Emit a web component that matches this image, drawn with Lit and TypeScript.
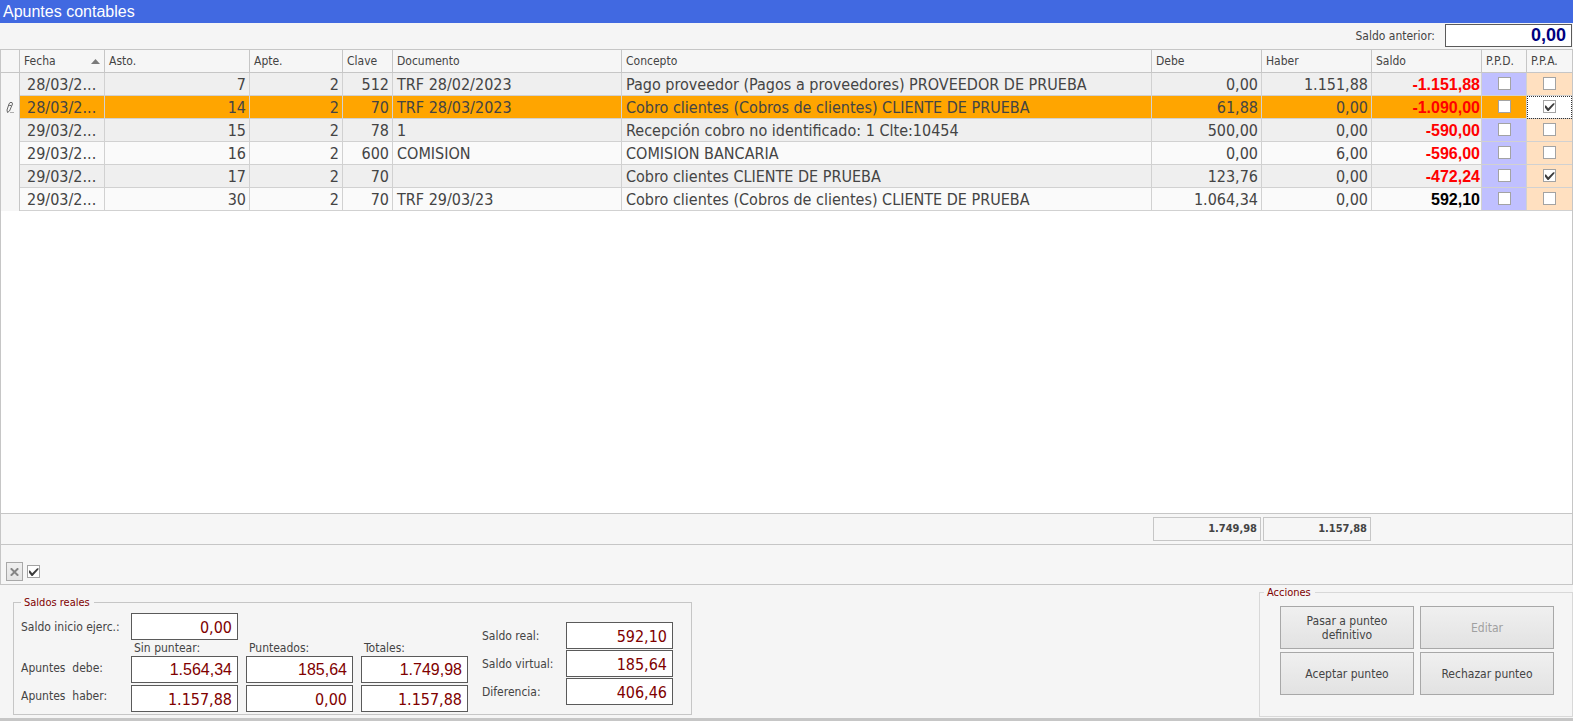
import { LitElement, html, css, svg, nothing } from "lit";
import { customElement, property } from "lit/decorators.js";
import { classMap } from "lit/directives/class-map.js";

interface Entry {
  fecha: string;
  asto: number;
  apte: number;
  clave: number;
  documento: string;
  concepto: string;
  debe: string;
  haber: string;
  saldo: string;
  ppd: boolean;
  ppa: boolean;
  current?: boolean;
}

const ENTRIES: Entry[] = [
  { fecha: "28/03/2...", asto: 7, apte: 2, clave: 512, documento: "TRF 28/02/2023", concepto: "Pago proveedor (Pagos a proveedores) PROVEEDOR DE PRUEBA", debe: "0,00", haber: "1.151,88", saldo: "-1.151,88", ppd: false, ppa: false },
  { fecha: "28/03/2...", asto: 14, apte: 2, clave: 70, documento: "TRF 28/03/2023", concepto: "Cobro clientes (Cobros de clientes) CLIENTE DE PRUEBA", debe: "61,88", haber: "0,00", saldo: "-1.090,00", ppd: false, ppa: true, current: true },
  { fecha: "29/03/2...", asto: 15, apte: 2, clave: 78, documento: "1", concepto: "Recepción cobro no identificado: 1 Clte:10454", debe: "500,00", haber: "0,00", saldo: "-590,00", ppd: false, ppa: false },
  { fecha: "29/03/2...", asto: 16, apte: 2, clave: 600, documento: "COMISION", concepto: "COMISION BANCARIA", debe: "0,00", haber: "6,00", saldo: "-596,00", ppd: false, ppa: false },
  { fecha: "29/03/2...", asto: 17, apte: 2, clave: 70, documento: "", concepto: "Cobro clientes CLIENTE DE PRUEBA", debe: "123,76", haber: "0,00", saldo: "-472,24", ppd: false, ppa: true },
  { fecha: "29/03/2...", asto: 30, apte: 2, clave: 70, documento: "TRF 29/03/23", concepto: "Cobro clientes (Cobros de clientes) CLIENTE DE PRUEBA", debe: "1.064,34", haber: "0,00", saldo: "592,10", ppd: false, ppa: false },
];

@customElement("tick-box")
class TickBox extends LitElement {
  static styles = css`
    :host { display: inline-block; vertical-align: top; }
    .box { display: grid; width: 13px; height: 13px; }
    .input {
      grid-area: 1 / 1; appearance: none; margin: 0; width: 13px; height: 13px;
      box-sizing: border-box; border: 1px solid #a3a3a3; background: #fff;
    }
    .mark { grid-area: 1 / 1; width: 13px; height: 13px; fill: #3c3c3c; pointer-events: none; visibility: hidden; }
    .input:checked + .mark { visibility: visible; }
  `;
  @property({ type: Boolean }) checked = false;
  @property() name = "";
  render() {
    return html`<label class="box">
      <input class="input" type="checkbox" aria-label=${this.name} .checked=${this.checked} />
      <svg class="mark" viewBox="0 0 13 13"><path d="M2 5.6 L3 5.6 L5.2 8.2 L10 3.6 L11.4 3 L11.4 4.4 L5.6 11 L4.6 11 L2 7.8 Z" /></svg>
    </label>`;
  }
}

@customElement("entries-grid")
class EntriesGrid extends LitElement {
  static styles = css`
    :host {
      display: flex; flex-direction: column; box-sizing: border-box;
      border: 1px solid #c6c6c6; background: #fff;
    }
    .table { width: 100%; table-layout: fixed; border-collapse: separate; border-spacing: 0; }
    .c-mark { width: 19px; } .c-date { width: 85px; } .c-asto { width: 145px; }
    .c-apte { width: 93px; } .c-key { width: 50px; } .c-doc { width: 229px; }
    .c-money { width: 110px; } .c-flag { width: 45px; }
    .head {
      box-sizing: border-box; height: 23px; padding: 0 4px; background: #f6f6f6; text-align: left;
      font-size: 12px; line-height: 20px; font-weight: normal; white-space: nowrap;
      border-right: 1px solid #c6c6c6; border-bottom: 1px solid #c6c6c6;
    }
    .head:last-child, .cell:last-child { border-right: none; }
    .sorted { display: flex; justify-content: space-between; align-items: center; }
    .arrow { width: 9px; height: 5px; fill: #7a7a7a; }
    .mark {
      height: 23px; padding: 0; text-align: center; background: #f6f6f6;
      border-right: 1px solid #c6c6c6; line-height: 0;
    }
    .pencil { width: 8px; height: 13px; vertical-align: middle; }
    .cell {
      box-sizing: border-box; height: 23px; padding: 2px 4px 0; font-size: 16px; line-height: 20px;
      white-space: nowrap; overflow: hidden; background: #fafafa;
      border-right: 1px solid #d1d1d1; border-bottom: 1px solid #d1d1d1;
    }
    .row:nth-child(odd) .cell { background: #efefef; }
    .date { padding-left: 7px; }
    .num { text-align: right; padding-right: 3px; }
    .saldo {
      text-align: right; padding-right: 1px; color: #ff0000;
      font-family: "Liberation Sans", Arial, sans-serif; font-weight: bold;
    }
    .positive { color: #000; }
    .flag { text-align: center; padding: 4px 0 5px; line-height: 0; }
    .row .cell.ppd { background: #c0c0ff; }
    .row .cell.ppa { background: #ffe0c0; }
    .row.current .cell { background: #ffa500; }
    .row.current .cell.ppa { background: #fff; outline: 1px dotted #333; outline-offset: -1px; }
    .totals {
      display: flex; justify-content: flex-end; gap: 2px; margin-top: auto;
      padding: 3px 201px 3px 0; background: #f6f6f6; border-top: 1px solid #c6c6c6;
    }
    .total {
      box-sizing: border-box; width: 108px; height: 24px; padding-right: 3px; text-align: right;
      border: 1px solid #c6c6c6; font-size: 11px; line-height: 22px; font-weight: bold;
    }
    .filter {
      display: flex; align-items: center; gap: 4px; padding: 17px 5px 3px; background: #f6f6f6;
      border-top: 1px solid #c6c6c6;
    }
    .clear {
      display: grid; place-items: center; box-sizing: border-box; width: 17px; height: 19px; padding: 0;
      border: 1px solid #a8a8a8; background: linear-gradient(#f0f0f0, #e4e4e4);
    }
    .cross { width: 9px; height: 8px; stroke: #858585; stroke-width: 2; }
  `;

  private row(e: Entry) {
    return html`<tr class=${classMap({ row: true, current: !!e.current })}>
      <td class="mark">${e.current
        ? svg`<svg class="pencil" viewBox="0 0 8 13" fill="none" stroke="#666" stroke-width="1">
            <path d="M3 3 L4 1.5 L6 1.5 L6.5 3 L3.5 10 L1.5 11.5 L1 9 Z M3.2 4.5 L5.3 4.5" />
            <path d="M4.5 11.5 h1 M6.5 11.5 h1" /></svg>`
        : nothing}</td>
      <td class="cell date">${e.fecha}</td>
      <td class="cell num">${e.asto}</td>
      <td class="cell num">${e.apte}</td>
      <td class="cell num">${e.clave}</td>
      <td class="cell">${e.documento}</td>
      <td class="cell">${e.concepto}</td>
      <td class="cell num">${e.debe}</td>
      <td class="cell num">${e.haber}</td>
      <td class=${classMap({ cell: true, saldo: true, positive: !e.saldo.startsWith("-") })}>${e.saldo}</td>
      <td class="cell flag ppd"><tick-box name="P.P.D." .checked=${e.ppd}></tick-box></td>
      <td class="cell flag ppa"><tick-box name="P.P.A." .checked=${e.ppa}></tick-box></td>
    </tr>`;
  }

  render() {
    return html`
      <table class="table">
        <colgroup>
          <col class="c-mark" /><col class="c-date" /><col class="c-asto" /><col class="c-apte" />
          <col class="c-key" /><col class="c-doc" /><col /><col class="c-money" />
          <col class="c-money" /><col class="c-money" /><col class="c-flag" /><col class="c-flag" />
        </colgroup>
        <thead>
          <tr>
            <th class="head"></th>
            <th class="head"><span class="sorted">Fecha <svg class="arrow" viewBox="0 0 9 5"><path d="M0 5 L4.5 0 L9 5 Z" /></svg></span></th>
            ${["Asto.", "Apte.", "Clave", "Documento", "Concepto", "Debe", "Haber", "Saldo", "P.P.D.", "P.P.A."].map(
              (t) => html`<th class="head">${t}</th>`
            )}
          </tr>
        </thead>
        <tbody>${ENTRIES.map((e) => this.row(e))}</tbody>
      </table>
      <div class="totals">
        <output class="total">1.749,98</output>
        <output class="total">1.157,88</output>
      </div>
      <div class="filter">
        <button class="clear" aria-label="Quitar filtro">
          <svg class="cross" viewBox="0 0 9 8"><path d="M0.8 0.3 L8.2 7.7 M8.2 0.3 L0.8 7.7" /></svg>
        </button>
        <tick-box name="Filtro activo" .checked=${true}></tick-box>
      </div>
    `;
  }
}

@customElement("app-root")
class AppRoot extends LitElement {
  static styles = css`
    :host {
      display: flex; flex-direction: column; box-sizing: border-box; min-height: 100vh;
      background: #f5f5f5; color: #444; border-bottom: 3px solid #c6c6c6;
      font-family: "DejaVu Sans Condensed", "Noto Sans", sans-serif; font-size: 12px; line-height: 14px;
    }
    .title {
      margin: 0; height: 23px; padding-left: 3px; background: #4169e1; color: #fff;
      font: 16px/23px "Liberation Sans", Arial, sans-serif;
    }
    .opening { display: flex; justify-content: flex-end; align-items: center; gap: 10px; padding: 1px 1px 2px; }
    .field {
      box-sizing: border-box; width: 107px; height: 27px; margin: 0; padding: 2px 5px 0; text-align: right;
      border: 1px solid #5a5a5a; border-radius: 0; background: #fff; color: #800000;
      font-family: inherit; font-size: 16px;
    }
    .arial { padding-top: 0; font-family: "Liberation Sans", Arial, sans-serif; }
    .opening-field {
      width: 127px; height: 23px; padding-top: 0; color: #000080; font-size: 18px; font-weight: bold;
      font-family: "Liberation Sans", Arial, sans-serif;
    }
    .grid { flex: 1; }
    .bottom { display: flex; justify-content: space-between; padding-top: 1px; }
    .group { box-sizing: border-box; margin: 0; min-width: 0; border: 1px solid #c6c6c6; }
    .legend { padding: 0 4px 0 3px; color: #800000; font-size: 11px; line-height: 13px; }
    .balances { display: flex; align-items: flex-start; gap: 14px; margin: 10px 0 3px 13px; padding: 4px 18px 2px 7px; }
    .real {
      display: grid; grid-template-columns: 102px repeat(3, 107px); grid-template-rows: 27px 16px 27px 29px;
      column-gap: 8px; align-items: center;
    }
    .start { grid-column: 2 / -1; }
    .caption { padding-left: 3px; }
    .first-caption { grid-column: 2; }
    .line { white-space: pre; padding-bottom: 4px; }
    .low { align-self: end; }
    .summary { display: grid; grid-template-columns: 84px 107px; row-gap: 1px; align-items: center; padding-top: 9px; }
    .actions { border-color: #d8d8d8; padding: 7px 18px 0 4px; margin-bottom: 1px; }
    .buttons {
      display: grid; grid-template-columns: 134px 134px; grid-auto-rows: 43px; gap: 3px 6px;
      padding-left: 16px;
    }
    .button {
      padding: 0 20px; border: 1px solid #a8a8a8; border-radius: 0; color: #444;
      background: linear-gradient(#f0f0f0, #e2e2e2); font: inherit;
    }
    .button:disabled { color: #a0a0a0; }
    .wide { padding: 0 4px; }
  `;

  render() {
    return html`
      <h1 class="title">Apuntes contables</h1>
      <div class="opening">
        <label for="opening">Saldo anterior:</label>
        <input id="opening" class="field opening-field" readonly value="0,00" />
      </div>
      <entries-grid class="grid"></entries-grid>
      <div class="bottom">
        <fieldset class="group balances">
          <legend class="legend">Saldos reales</legend>
          <div class="real">
            <label for="start">Saldo inicio ejerc.:</label>
            <input id="start" class="field start" readonly value="0,00" />
            <span class="caption first-caption">Sin puntear:</span>
            <span class="caption">Punteados:</span>
            <span class="caption">Totales:</span>
            <label class="line" for="debit">Apuntes  debe:</label>
            <input id="debit" class="field arial" readonly value="1.564,34" />
            <input class="field arial" aria-label="Debe punteados" readonly value="185,64" />
            <input class="field arial" aria-label="Debe totales" readonly value="1.749,98" />
            <label class="line" for="credit">Apuntes  haber:</label>
            <input id="credit" class="field low" readonly value="1.157,88" />
            <input class="field low" aria-label="Haber punteados" readonly value="0,00" />
            <input class="field low" aria-label="Haber totales" readonly value="1.157,88" />
          </div>
          <div class="summary">
            <label for="actual">Saldo real:</label><input id="actual" class="field" readonly value="592,10" />
            <label for="virtual">Saldo virtual:</label><input id="virtual" class="field" readonly value="185,64" />
            <label for="diff">Diferencia:</label><input id="diff" class="field" readonly value="406,46" />
          </div>
        </fieldset>
        <fieldset class="group actions">
          <legend class="legend">Acciones</legend>
          <div class="buttons">
            <button class="button">Pasar a punteo definitivo</button>
            <button class="button" disabled>Editar</button>
            <button class="button wide">Aceptar punteo</button>
            <button class="button wide">Rechazar punteo</button>
          </div>
        </fieldset>
      </div>
    `;
  }
}
